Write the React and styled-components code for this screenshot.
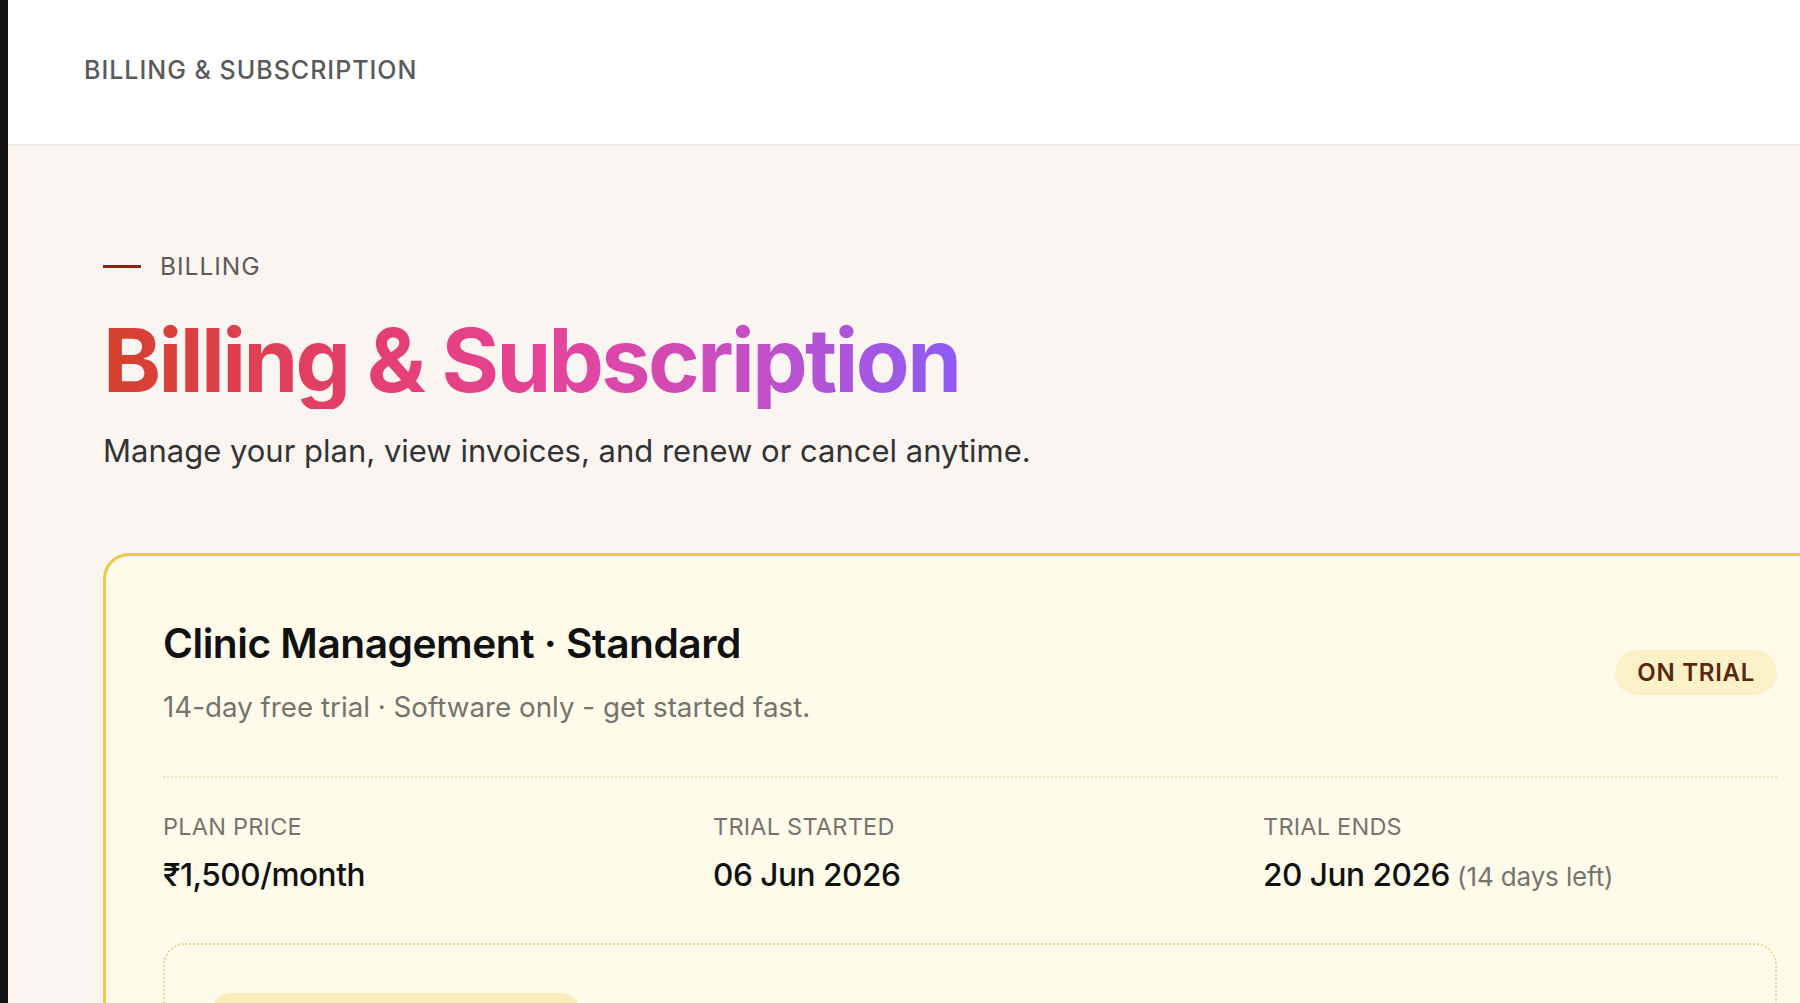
import React from 'react';
import styled, { createGlobalStyle } from 'styled-components';

const GlobalStyle = createGlobalStyle`
  html, body {
    margin: 0;
    padding: 0;
    overflow: hidden;
    background: #fbf5f2;
  }
  body {
    font-family: Inter, "Noto Sans", "Liberation Sans", sans-serif;
    -webkit-font-smoothing: antialiased;
  }
  * {
    box-sizing: border-box;
  }
`;

const Shell = styled.div`
  display: flex;
  min-height: 1003px;
  width: 1800px;
  overflow: hidden;
`;

const SideEdge = styled.div`
  flex: 0 0 8px;
  background: #141414;
`;

const Page = styled.div`
  flex: 1;
  min-width: 0;
  display: flex;
  flex-direction: column;
  background: #fbf5f2;
`;

const TopBar = styled.header`
  height: 146px;
  display: flex;
  align-items: center;
  padding: 0 0 4px 76px;
  background: #ffffff;
  border-bottom: 2px solid #eeeae6;
`;

const TopBarTitle = styled.h2`
  margin: 0;
  font-size: 25px;
  font-weight: 500;
  letter-spacing: 0.04em;
  color: #5a5a5a;
  text-transform: uppercase;
`;

const Main = styled.main`
  padding: 105px 0 0 95px;
`;

const Content = styled.div`
  width: 1734px;
`;

const Eyebrow = styled.div`
  display: flex;
  align-items: center;
  gap: 19px;
  height: 30px;
  font-size: 24.5px;
  letter-spacing: 0.04em;
  color: #5c5c5c;
  text-transform: uppercase;
`;

const EyebrowLine = styled.span`
  width: 38px;
  height: 3px;
  background: #8c2616;
`;

const Heading = styled.h1`
  margin: 31px 0 0;
  font-size: 88px;
  line-height: 1.1;
  font-weight: 700;
  letter-spacing: -0.03em;
  background: linear-gradient(90deg, #d5402b 0%, #e43f6e 30%, #e6439a 52%, #c54fc6 75%, #8b5cf6 100%);
  -webkit-background-clip: text;
  background-clip: text;
  color: transparent;
  width: fit-content;
  padding-right: 6px;
`;

const Lead = styled.p`
  margin: 20px 0 0;
  font-size: 31px;
  line-height: 1.4;
  color: #333333;
`;

const PlanCard = styled.section`
  margin-top: 81px;
  padding: 64px 57px 0;
  background: #fefbeb;
  border: 3px solid #ebc94a;
  border-radius: 26px;
  min-height: 500px;
`;

const PlanHeader = styled.div`
  display: flex;
  align-items: center;
  justify-content: space-between;
`;

const PlanText = styled.div`
  display: flex;
  flex-direction: column;
  gap: 21px;
`;

const PlanTitle = styled.h3`
  margin: 0;
  font-size: 40.7px;
  line-height: 48px;
  font-weight: 600;
  letter-spacing: -0.012em;
  color: #111111;
`;

const PlanSub = styled.p`
  margin: 0;
  font-size: 27.75px;
  line-height: 37px;
  color: #76736d;
`;

const StatusBadge = styled.span`
  height: 45px;
  display: inline-flex;
  align-items: center;
  padding: 0 22px;
  border-radius: 999px;
  background: #fbf1c8;
  color: #5a260c;
  font-size: 24px;
  font-weight: 600;
  letter-spacing: 0.03em;
  margin-top: -2px;
`;

const Divider = styled.hr`
  margin: 50px 0 0;
  border: 0;
  border-top: 2px dotted #ebe2c2;
`;

const Stats = styled.div`
  margin-top: 34px;
  display: grid;
  grid-template-columns: repeat(3, 1fr);
  column-gap: 36px;
`;

const Stat = styled.div`
  display: flex;
  flex-direction: column;
  gap: 13px;
`;

const StatLabel = styled.span`
  font-size: 23.5px;
  line-height: 30px;
  letter-spacing: 0.01em;
  color: #77746e;
  text-transform: uppercase;
`;

const StatValue = styled.span`
  font-size: 31.6px;
  line-height: 40px;
  font-weight: 500;
  letter-spacing: -0.015em;
  color: #111111;
`;

const StatNote = styled.span`
  font-size: 26px;
  font-weight: 400;
  color: #77746e;
  letter-spacing: -0.005em;
`;

const RenewBox = styled.div`
  margin-top: 46px;
  padding: 48px 46px;
  border: 2px dotted #e6d69c;
  border-radius: 22px;
  min-height: 200px;
`;

const RenewPill = styled.div`
  width: 370px;
  height: 42px;
  border-radius: 999px;
  background: #fbedb9;
`;

const stats = [
  { label: 'Plan price', value: '₹1,500/month' },
  { label: 'Trial started', value: '06 Jun 2026' },
  { label: 'Trial ends', value: '20 Jun 2026', note: '(14 days left)' },
];

function App() {
  return (
    <>
      <GlobalStyle />
      <Shell>
        <SideEdge />
        <Page>
          <TopBar>
            <TopBarTitle>Billing &amp; Subscription</TopBarTitle>
          </TopBar>
          <Main>
            <Content>
              <Eyebrow>
                <EyebrowLine />
                Billing
              </Eyebrow>
              <Heading>Billing &amp; Subscription</Heading>
              <Lead>Manage your plan, view invoices, and renew or cancel anytime.</Lead>

              <PlanCard>
                <PlanHeader>
                  <PlanText>
                    <PlanTitle>Clinic Management · Standard</PlanTitle>
                    <PlanSub>14-day free trial · Software only - get started fast.</PlanSub>
                  </PlanText>
                  <StatusBadge>ON TRIAL</StatusBadge>
                </PlanHeader>
                <Divider />
                <Stats>
                  {stats.map((s) => (
                    <Stat key={s.label}>
                      <StatLabel>{s.label}</StatLabel>
                      <StatValue>
                        {s.value}
                        {s.note && <StatNote> {s.note}</StatNote>}
                      </StatValue>
                    </Stat>
                  ))}
                </Stats>
                <RenewBox>
                  <RenewPill />
                </RenewBox>
              </PlanCard>
            </Content>
          </Main>
        </Page>
      </Shell>
    </>
  );
}

export default App;
